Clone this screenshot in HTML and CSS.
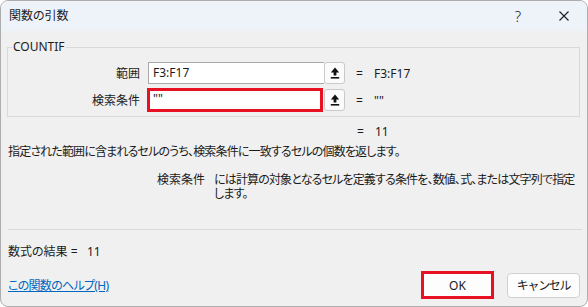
FILE: index.html
```html
<!DOCTYPE html>
<html lang="ja">

<head>
    <meta charset="UTF-8">
    <meta name="viewport" content="width=device-width, initial-scale=1.0">
    <title>関数の引数</title>
    <link rel="stylesheet" href="styles.css">
</head>

<body>
    <div class="dialog">
        <div class="titlebar">
            <span class="title">関数の引数</span>
            <div class="caption">
                <span class="capBtn help">?</span>
                <span class="capBtn">
                    <svg width="10" height="10" viewBox="0 0 10 10">
                        <path d="M0.5 0.5L9.5 9.5M9.5 0.5L0.5 9.5" stroke="#1b1b1b" stroke-width="1.1" />
                    </svg>
                </span>
            </div>
        </div>
        <div class="content">
            <fieldset class="args">
                <legend>COUNTIF</legend>
                <div class="argRow">
                    <span class="argLabel">範囲</span>
                    <div class="ref">
                        <span class="refField">F3:F17</span>
                        <span class="refBtn">
                            <svg width="10" height="12" viewBox="0 0 10 12">
                                <path d="M5 0.5L0.8 5.5H3.6V8.6H6.4V5.5H9.2Z" fill="#111" />
                                <rect x="0.8" y="10" width="8.4" height="1.6" fill="#111" />
                            </svg>
                        </span>
                    </div>
                    <span class="eq">=</span>
                    <span class="argValue">F3:F17</span>
                </div>
                <div class="argRow">
                    <span class="argLabel">検索条件</span>
                    <div class="ref">
                        <span class="refField marked">""</span>
                        <span class="refBtn">
                            <svg width="10" height="12" viewBox="0 0 10 12">
                                <path d="M5 0.5L0.8 5.5H3.6V8.6H6.4V5.5H9.2Z" fill="#111" />
                                <rect x="0.8" y="10" width="8.4" height="1.6" fill="#111" />
                            </svg>
                        </span>
                    </div>
                    <span class="eq">=</span>
                    <span class="argValue">""</span>
                </div>
            </fieldset>
            <div class="total"><span class="eq">=</span><span class="argValue">11</span></div>
            <p class="summary">指定された範囲に含まれるセルのうち、検索条件に一致するセルの個数を返します。</p>
            <div class="param">
                <span class="paramName">検索条件</span>
                <span class="paramDesc">には計算の対象となるセルを定義する条件を、数値、式、または文字列で指定します。</span>
            </div>
            <hr class="sep">
            <div class="result">数式の結果 =&nbsp;&nbsp;&nbsp;11</div>
            <div class="footer">
                <a href="#" class="helpLink">この関数のヘルプ(H)</a>
                <div class="buttons">
                    <button class="btn ok">OK</button>
                    <button class="btn cancel">キャンセル</button>
                </div>
            </div>
        </div>
    </div>
</body>

</html>
```

FILE: styles.css
```css
:root {
    --window: #f0f0f0;
    --title: #eef2f9;
    --text: #1b1b1b;
    --line: #d9d9d9;
    --field: #a9a9a9;
    --mark: #e81123;
    --link: #0067c0;
    --font: "Noto Sans", "Noto Sans CJK JP", sans-serif;
}

html,
body {
    margin: 0;
    background-color: #ffffff;
}

body {
    font-family: var(--font);
    font-size: 12px;
    color: var(--text);
    font-feature-settings: "palt";
}

.dialog {
    width: 588px;
    height: 307px;
    box-sizing: border-box;
    border: 1px solid #adadad;
    border-radius: 8px;
    background-color: var(--window);
    overflow: hidden;
}

.titlebar {
    height: 30px;
    display: flex;
    align-items: center;
    background-color: var(--title);
    padding-left: 8px;
}

.title {
    flex: 1;
    line-height: 16px;
}

.caption {
    display: flex;
    height: 30px;
}

.capBtn {
    width: 46px;
    display: flex;
    align-items: center;
    justify-content: center;
}

.help {
    font-size: 15px;
    font-weight: 300;
}

.content {
    padding: 0 7px 0 6px;
}

.args {
    margin: 8px 0 0 0;
    padding: 7px 0 5px 0;
    border: 1px solid var(--line);
    min-width: 0;
}

.args legend {
    margin-left: 4px;
    padding: 0 1px;
    line-height: 16px;
}

.argRow {
    display: flex;
    align-items: center;
    height: 22px;
}

.argRow+.argRow {
    margin-top: 5px;
}

.argLabel {
    width: 132px;
    margin-right: 8px;
    text-align: right;
}

.ref {
    width: 197px;
    height: 22px;
    display: flex;
}

.refField {
    flex: 1;
    box-sizing: border-box;
    height: 22px;
    border: 1px solid var(--field);
    border-right: none;
    background-color: #ffffff;
    padding: 0 4px;
    line-height: 20px;
}

.refField.marked {
    border: none;
    margin-right: 2px;
    padding-left: 5px;
    background-color: #ffffff;
    outline: 3px solid var(--mark);
    outline-offset: -2px;
}

.refBtn {
    width: 21px;
    height: 22px;
    box-sizing: border-box;
    border: 1px solid #c9c9c9;
    border-radius: 3px;
    background-color: #fbfbfb;
    display: flex;
    align-items: center;
    justify-content: center;
}

.eq {
    margin-left: 11px;
    width: 18px;
}

.total {
    display: flex;
    padding-left: 339px;
    margin-top: 7px;
    line-height: 16px;
}

.summary {
    margin: 4px 0 0 1px;
    line-height: 16px;
    letter-spacing: -0.84px;
}

.param {
    display: flex;
    margin-top: 13px;
    line-height: 14px;
}

.paramName {
    width: 198px;
    text-align: right;
    flex-shrink: 0;
    margin-right: 9px;
}

.paramDesc {
    width: 368px;
    letter-spacing: -0.84px;
}

.sep {
    margin: 28px -2px 0 1px;
    border: none;
    border-top: 1px solid var(--line);
}

.result {
    margin: 14px 0 0 1px;
    line-height: 16px;
}

.footer {
    display: flex;
    align-items: center;
    justify-content: space-between;
    height: 28px;
    margin-top: 11px;
    padding-left: 1px;
}

.helpLink {
    color: var(--link);
    letter-spacing: -0.7px;
}

.buttons {
    display: flex;
    align-items: center;
    gap: 13px;
}

.btn {
    width: 73px;
    height: 25px;
    box-sizing: border-box;
    border: 1px solid #d0d0d0;
    border-radius: 4px;
    background-color: #fdfdfd;
    font-family: var(--font);
    font-size: 12px;
    color: var(--text);
    padding: 0;
}

.btn.cancel {
    letter-spacing: -1.3px;
}

.btn.ok {
    height: 28px;
    border: 3px solid var(--mark);
    border-radius: 0;
}
```
